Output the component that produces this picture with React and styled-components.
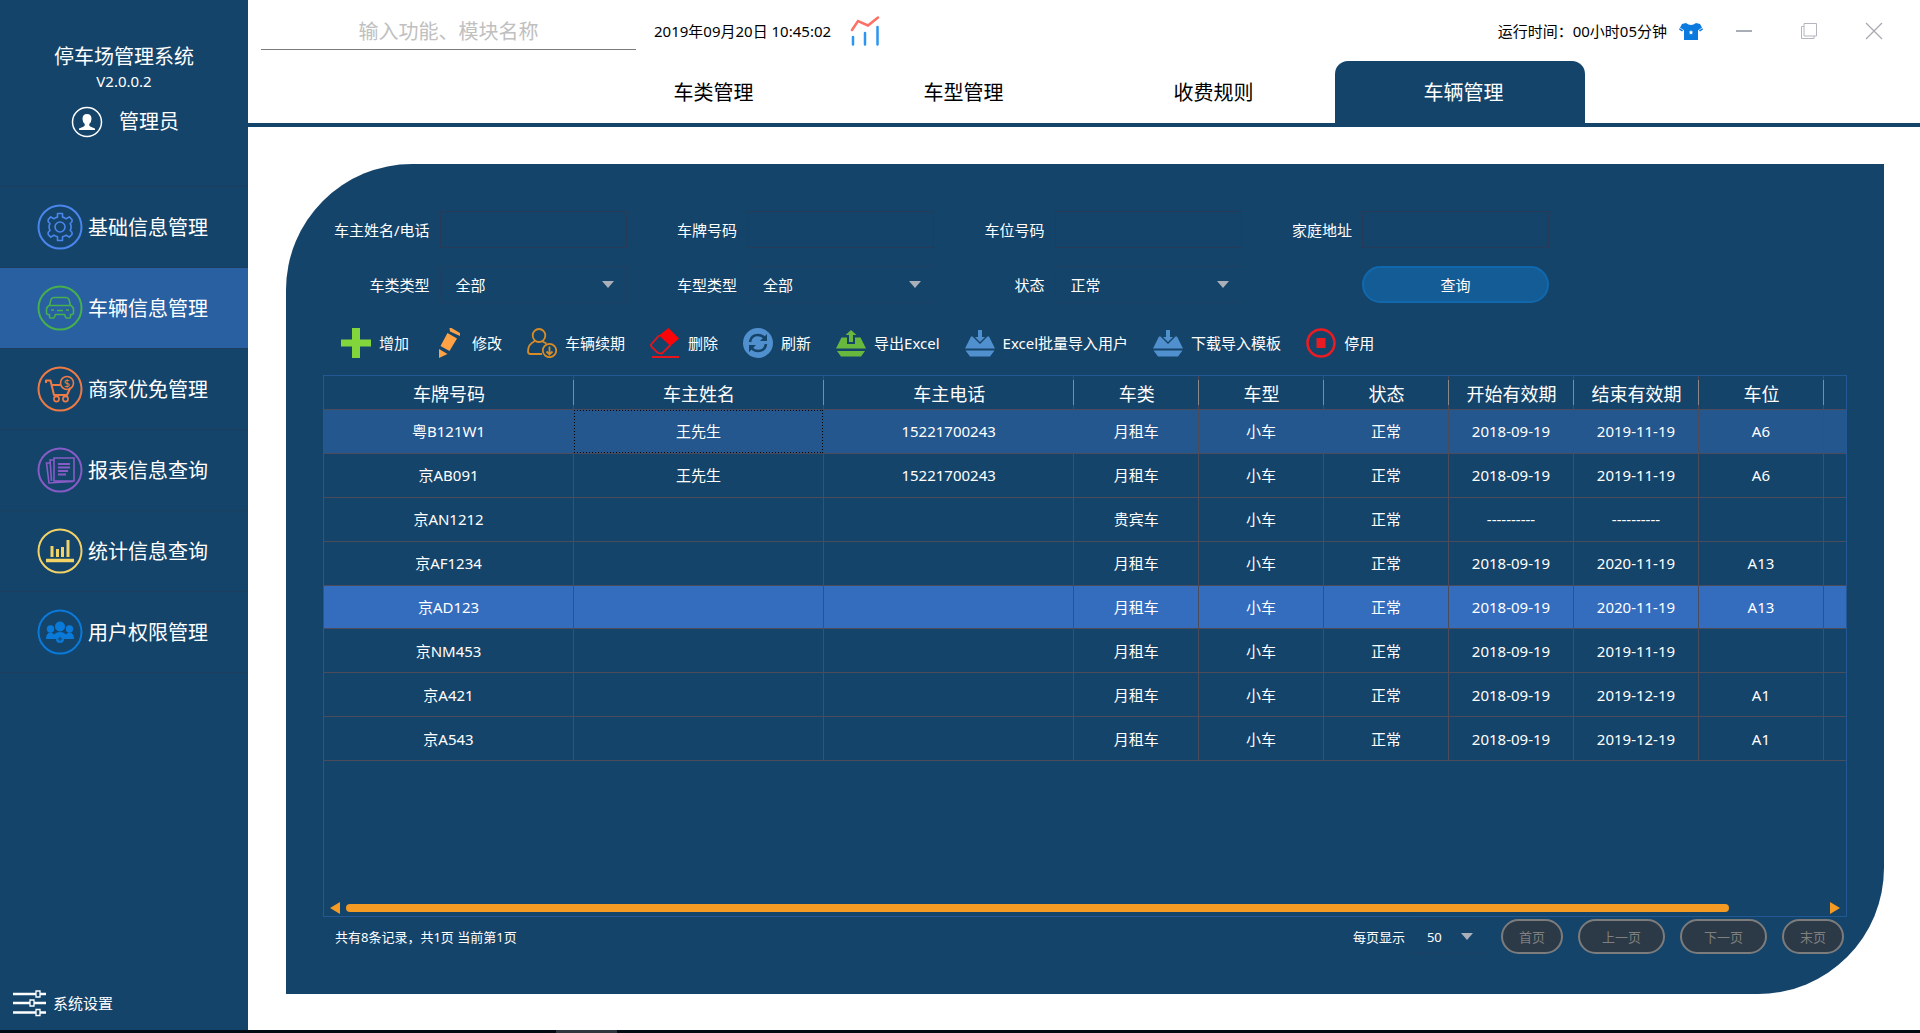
import React from 'react'
import styled, { createGlobalStyle } from "styled-components"

const GlobalStyle = createGlobalStyle`
  * {
    box-sizing: border-box;
  }

  body {
    margin: 0;
    background-color: white;
  }

  body, button, input, select {
    font-family: "Noto Sans", "Noto Sans CJK SC", sans-serif;
    font-size: 15px;
  }

  button {
    padding: 0;
    border: none;
    background: none;
    color: inherit;
    cursor: pointer;
  }
`;

const Page = styled.div`
  min-height: 100vh;
  display: flex;
  flex-direction: column;
`;

const Body = styled.div`
  flex: 1;
  display: flex;
`;

const TaskStrip = styled.div`
  height: 3px;
  padding-left: 556px;
  background-color: #020a14;
`;

const TaskMark = styled.div`
  width: 61px;
  height: 3px;
  background-color: #2f353c;
`;

/* sidebar */

const Sidebar = styled.aside`
  flex: 0 0 248px;
  display: flex;
  flex-direction: column;
  background-color: #15446a;
  color: white;
`;

const Brand = styled.div`
  height: 186px;
  padding-top: 45px;
  display: flex;
  flex-direction: column;
  align-items: center;
`;

const Title = styled.h1`
  margin: 0;
  font-size: 20px;
  line-height: 24px;
  font-weight: 400;
`;

const Version = styled.span`
  margin-top: 2px;
  line-height: 20px;
`;

const User = styled.div`
  margin-top: 15px;
  padding-left: 2px;
  display: flex;
  align-items: center;
  gap: 16px;
  font-size: 20px;
  line-height: 32px;
`;

const Menu = styled.nav`
  flex: 1;
`;

const MenuItem = styled.a`
  height: 81px;
  padding-left: 37px;
  border-top: 1px solid #1d3f5d;
  display: flex;
  align-items: center;
  gap: 5px;
  color: white;
  font-size: 20px;
  line-height: 24px;
  text-decoration: none;
  background-color: ${(props) => (props.$active ? "#2960a2" : "transparent")};

  span {
    padding-top: 2px;
  }

  &:last-child {
    height: 82px;
    border-bottom: 1px solid #1d3f5d;
  }
`;

const Settings = styled.a`
  height: 54px;
  padding-left: 13px;
  display: flex;
  align-items: center;
  gap: 7px;
  color: white;
  line-height: 20px;
  text-decoration: none;
`;

/* header */

const Main = styled.main`
  flex: 1;
  min-width: 0;
  display: flex;
  flex-direction: column;
`;

const Header = styled.header`
  height: 61px;
  padding: 0 14px 0 13px;
  display: flex;
  align-items: center;
  color: black;
`;

const Search = styled.input`
  width: 375px;
  height: 38px;
  padding: 2px 0 0;
  border: none;
  border-bottom: 1px solid #7a7a7a;
  outline: none;
  background: none;
  font-size: 20px;
  text-align: center;

  &::placeholder {
    color: #c0c0c0;
  }
`;

const Clock = styled.time`
  margin: 0 19px 0 18px;
  line-height: 20px;
`;

const Runtime = styled.span`
  margin-left: auto;
  margin-right: 12px;
  line-height: 20px;
`;

const IconButton = styled.button`
  display: flex;
`;

const WindowButtons = styled.div`
  margin-left: 8px;
  display: flex;
`;

const WindowButton = styled.button`
  width: 65px;
  height: 40px;
  display: flex;
  align-items: center;
  justify-content: center;
`;

const Tabs = styled.nav`
  padding-left: 2px;
  display: flex;
  justify-content: center;
  border-bottom: 4px solid #15446a;
`;

const Tab = styled.button`
  width: 250px;
  height: 62px;
  padding: 2px 0 0 7px;
  border-radius: 13px 13px 0 0;
  font-size: 20px;
  line-height: 24px;
  background-color: ${(props) => (props.$active ? "#15446a" : "transparent")};
  color: ${(props) => (props.$active ? "white" : "black")};
`;

/* panel */

const Panel = styled.section`
  flex: 1;
  margin: 37px 36px 36px 38px;
  padding: 47px 37px 40px;
  display: flex;
  flex-direction: column;
  border-radius: 126px 0 126px 0;
  background-color: #15446a;
  color: white;
`;

const Filters = styled.form`
  max-width: 1226px;
  display: grid;
  grid-template-columns: repeat(4, 1fr);
  gap: 18px 4px;
`;

const Field = styled.div`
  display: flex;
  align-items: center;
  justify-content: flex-end;
  gap: 10px;
  line-height: 20px;
`;

const TextInput = styled.input`
  width: 187px;
  height: 37px;
  padding: 0 15px;
  border: 1px solid #273a57;
  outline: none;
  background: none;
  color: white;
`;

const SelectBox = styled.div`
  display: grid;
  align-items: center;

  > * {
    grid-area: 1 / 1;
  }

  svg {
    justify-self: end;
    margin-right: 13px;
    pointer-events: none;
  }
`;

const Select = styled.select`
  width: ${(props) => (props.$small ? "75px" : "187px")};
  height: ${(props) => (props.$small ? "35px" : "37px")};
  padding: 0 15px;
  border: 1px solid #1e3f62;
  outline: none;
  appearance: none;
  background: none;
  color: white;
  font-size: ${(props) => (props.$small ? "13px" : "15px")};
`;

const QueryButton = styled.button`
  width: 187px;
  height: 37px;
  border: 2px solid #1168ad;
  border-radius: 19px;
  background-color: #145c95;
`;

const Toolbar = styled.div`
  margin: 25px 0 17px;
  padding-left: 18px;
  display: flex;
  flex-wrap: wrap;
  gap: 25px;
`;

const Tool = styled.button`
  display: flex;
  align-items: center;
  gap: 8px;
  line-height: 20px;
`;

const TableBox = styled.div`
  flex: 1;
  border: 1px solid #225995;
  display: flex;
  flex-direction: column;
  justify-content: space-between;
`;

const Table = styled.table`
  width: 100%;
  height: 385px;
  table-layout: fixed;
  border-collapse: separate;
  border-spacing: 0;
  text-align: center;
`;

const Col = styled.col`
  width: ${(props) => props.$width};
`;

const HeadCell = styled.th`
  height: 34px;
  padding: 2px 0 0;
  border-bottom: 1px solid #4b4b5c;
  background:
    linear-gradient(#8c8788, #8c8788) right center / 1px 25px no-repeat,
    linear-gradient(#4b4b5c, #4b4b5c) right center / 1px 100% no-repeat;
  font-size: 18px;
  line-height: 24px;
  font-weight: 400;

  &:last-child {
    background: none;
  }
`;

const Row = styled.tr`
  background-color: ${(props) => props.$color || "transparent"};
`;

const dots = (direction) =>
  `repeating-linear-gradient(to ${direction}, black 0 1px, transparent 1px 3px)`;

const Cell = styled.td`
  padding: 0;
  border-right: 1px solid #4b4b5c;
  border-bottom: 1px solid #4b4b5c;
  line-height: 20px;

  ${(props) =>
    props.$focused &&
    `
    background:
      ${dots("right")} top / 100% 1px no-repeat,
      ${dots("right")} bottom / 100% 1px no-repeat,
      ${dots("bottom")} left / 1px 100% no-repeat,
      ${dots("bottom")} right / 1px 100% no-repeat;
  `}

  &:last-child {
    border-right: none;
  }
`;

const Scrollbar = styled.div`
  padding: 0 6px 2px;
  display: flex;
  align-items: center;
  gap: 6px;
`;

const Track = styled.div`
  flex: 1;
`;

const Thumb = styled.div`
  width: 93.6%;
  height: 8px;
  border-radius: 4px;
  background-color: #f59a22;
`;

const Footer = styled.footer`
  margin-top: 2px;
  padding: 0 3px 0 12px;
  display: flex;
  align-items: center;
  gap: 15px;
  font-size: 13px;
  line-height: 20px;
`;

const Summary = styled.span`
  flex: 1;
`;

const PageSize = styled.div`
  display: flex;
  align-items: center;
  gap: 6px;
`;

const PageButton = styled.button`
  height: 35px;
  padding: 0 ${(props) => (props.$narrow ? "16px" : "22px")};
  border: 2px solid #7c7c7c;
  border-radius: 18px;
  background-color: #2c3a47;
  color: #7f7f7f;
  font-size: 13px;
  line-height: 20px;
`;

/* icons */

const Arrow = () => (
  <svg width="12" height="7" viewBox="0 0 12 7">
    <path d="M0 0h12L6 7z" fill="#a9b0b9" />
  </svg>
);

const Ring = ({ color, children }) => (
  <svg width="46" height="46" viewBox="0 0 46 46" fill="none" stroke={color} strokeWidth="1.6">
    <circle cx="23" cy="23" r="21.5" strokeWidth="2" />
    {children}
  </svg>
);

const GearIcon = () => (
  <Ring color="#4a86ee">
    <path
      strokeLinejoin="round"
      d="M20.5 9.5h5v3.6q2 .5 3.6 1.700l3.200-1.900 2.700 2.600v2.200l-1.800 1.800q.9 1.600.9 3.500t-.9 3.500l1.800 1.800v2.200l-2.700 2.600-3.200-1.900q-1.600 1.200-3.600 1.700v3.600h-5v-3.600q-2-.5-3.600-1.700l-3.200 1.900-2.500-2.600v-2.200l1.800-1.800q-.9-1.600-.9-3.500t.9-3.500l-1.800-1.800v-2.200l2.500-2.600 3.200 1.900q1.600-1.200 3.600-1.700z"
    />
    <circle cx="23" cy="23" r="5" />
  </Ring>
);

const CarIcon = () => (
  <Ring color="#46b04c">
    <path d="M12.500 20.500l1.500-6q.8-2 3-2h12q2.200 0 3 2l1.500 6" />
    <path d="M12 20.500h22q2.500 1.500 2.500 4V28q0 1.500-1.500 1.500h-1.500V32q0 1-1 1h-3q-1 0-1-1l-1-2.500h-9L17.500 32q0 1-1 1h-3q-1 0-1-1v-2.500H11Q9.500 29.500 9.500 28v-3.500q0-2.500 2.500-4z" strokeLinejoin="round" />
    <path d="M14 25h3M20 25.500h6M29 25h3" />
  </Ring>
);

const CartIcon = () => (
  <Ring color="#ee7b46">
    <path d="M9 17v-2.500h4.500L17 29h13l3.500-7.500M14.500 19h9" strokeWidth="2" strokeLinejoin="round" />
    <circle cx="19.500" cy="33" r="2.600" />
    <circle cx="28.500" cy="33" r="2.600" />
    <circle cx="30" cy="17" r="6.500" />
    <text x="30" y="21" textAnchor="middle" fontSize="11" fill="#ee7b46" stroke="none">$</text>
  </Ring>
);

const ReportIcon = () => (
  <Ring color="#875cc6">
    <path d="M17 11h20v23H17zM17 13h-4l1.500 21M13 16H9.500L12 36l24-1.500" />
    <path d="M21 17h12M21 20.500h12M21 24h10M21 27.500h8" strokeWidth="1.800" />
  </Ring>
);

const StatsIcon = () => (
  <Ring color="#f3d266">
    <path d="M15 18v11M20.500 21v8M25.500 19v10M31 12v17" strokeWidth="3" />
    <path d="M9 32.500h28" strokeWidth="3.500" />
  </Ring>
);

const PeopleIcon = () => (
  <Ring color="#0a7ada">
    <g fill="#0a7ada" stroke="none">
      <circle cx="13.500" cy="20" r="3.700" />
      <circle cx="32.500" cy="20" r="3.700" />
      <path d="M9 30q0-6 4.500-6.500 3 .5 4 2.500-1 1.500-1 4zM37 30q0-6-4.500-6.500-3 .5-4 2.500 1 1.500 1 4z" />
      <circle cx="23" cy="17.500" r="5" />
      <path d="M16 30q0-7 7-7t7 7h-3q-1-3-4-3t-4 3z" />
      <circle cx="23" cy="30" r="4" />
    </g>
    <path d="M23 27.700v4.600M20.700 30h4.600" stroke="#15446a" strokeWidth="1" />
  </Ring>
);

const UserIcon = () => (
  <svg width="32" height="32" viewBox="0 0 32 32">
    <circle cx="16" cy="16" r="14.500" fill="none" stroke="white" strokeWidth="1.500" />
    <path d="M16 8q4.500 0 4.500 5 0 3-2.200 5v1.500q0 .8 5.700 3v1.500H8v-1.500q5.700-2.200 5.700-3V18q-2.200-2-2.200-5 0-5 4.500-5z" fill="white" />
  </svg>
);

const SlidersIcon = () => (
  <svg width="33" height="28" viewBox="0 0 33 28" stroke="white">
    <path d="M0 5h33M0 14h33M0 23.500h33" strokeWidth="2.500" />
    <path d="M23 2h4v6h-4zM17 11h4v6h-4zM23 20.500h4v6h-4z" fill="#15446a" strokeWidth="1.300" />
  </svg>
);

const ChartIcon = () => (
  <svg width="30" height="30" viewBox="0 0 30 30" fill="none" strokeLinecap="round" strokeWidth="2.500">
    <path d="M2 14l6-9 10 4.500L28 1.500" stroke="#fc7066" />
    <path d="M3 21v7.500M15 17v11.500M27.500 11v17.500" stroke="#2b95f0" />
  </svg>
);

const ShirtIcon = () => (
  <svg width="24" height="18" viewBox="0 0 24 18">
    <path d="M7 1q5 4 10 0l4 1 3 5.500-3 2-2-2V18H5V7.500l-2 2-3-2L3 2z" fill="#0a7ade" />
    <path d="M1 6l3 2M23 6l-3 2" stroke="white" strokeWidth=".8" />
    <path d="M12 8l.7 1.500 1.600.2-1.200 1.100.3 1.700-1.400-.8-1.400.8.3-1.700-1.200-1.100 1.600-.2z" fill="white" />
  </svg>
);

const PlusIcon = () => (
  <svg width="30" height="30" viewBox="0 0 30 30">
    <path d="M11 0h8v11.500h11v7H19V30h-8V18.500H0v-7h11z" fill="#82d63c" />
  </svg>
);

const PencilIcon = () => (
  <svg width="30" height="30" viewBox="0 0 30 30" fill="#ffa145">
    <path d="M15.500 0h2l8.500 5v3L16 3.500zM13.500 5l9.500 5.500-7.500 12.500L6.500 18zM5 21l8.500 5L5 30z" />
  </svg>
);

const RenewIcon = () => (
  <svg width="30" height="30" viewBox="0 0 30 30" fill="none" stroke="#d98c26" strokeWidth="1.800">
    <ellipse cx="12" cy="7.500" rx="6.300" ry="6.500" />
    <path d="M8 13q-7 3-7 10.500Q1 26 3.500 26H15M15.500 13.500l4 2" />
    <circle cx="22.500" cy="22.500" r="6.700" />
    <path d="M22.500 18.500v7.500M19.500 23.500l3 3 3-3" />
  </svg>
);

const EraserIcon = () => (
  <svg width="30" height="30" viewBox="0 0 30 30">
    <path d="M18.500 0L29 10.500 20.500 18 9 7.500z" fill="#fb0508" />
    <path d="M9 7.500L1.200 16.500q-.7 1 .3 2.200l6 6q1 .9 4.500.6L20.500 17M2 29h27" fill="none" stroke="#e8141c" strokeWidth="1.800" />
  </svg>
);

const RefreshIcon = () => (
  <svg width="30" height="30" viewBox="0 0 30 30" fill="none">
    <circle cx="15" cy="15" r="15" fill="#5190cf" />
    <path d="M7 14q1-7 8-7 4 0 6.500 3M23 16q-1 7-8 7-4 0-6.500-3" stroke="#15446a" strokeWidth="2.500" />
    <path d="M24 6v7h-7zM6 24v-7h7z" fill="#15446a" />
  </svg>
);

const ExportIcon = () => (
  <svg width="30" height="30" viewBox="0 0 30 30" fill="#68b83e">
    <path d="M5.500 9.500H11V16h8V9.500h5.500L30 20.500H0zM1 23h28l-4 5.500H5z" />
    <path d="M15 2l5.500 5H17v7h-4V7H9.500z" />
  </svg>
);

const ImportIcon = () => (
  <svg width="30" height="30" viewBox="0 0 30 30" fill="#5190cf">
    <path d="M6 8.500h1.500L15 16l7.500-7.500H24l6 12H0zM.5 22.500h29L25 28.500H5z" />
    <path d="M13 2h4v7h3L15 14 10 9h3z" />
  </svg>
);

const StopIcon = () => (
  <svg width="30" height="30" viewBox="0 0 30 30">
    <circle cx="15" cy="15" r="13.500" fill="none" stroke="#e81c22" strokeWidth="2.600" />
    <path d="M10.500 10h9v10h-9z" fill="#e81c22" />
  </svg>
);

const menu = [
  { label: "基础信息管理", icon: <GearIcon /> },
  { label: "车辆信息管理", icon: <CarIcon />, active: true },
  { label: "商家优免管理", icon: <CartIcon /> },
  { label: "报表信息查询", icon: <ReportIcon /> },
  { label: "统计信息查询", icon: <StatsIcon /> },
  { label: "用户权限管理", icon: <PeopleIcon /> },
];

const tabs = ["车类管理", "车型管理", "收费规则", "车辆管理"];

const tools = [
  { label: "增加", icon: <PlusIcon /> },
  { label: "修改", icon: <PencilIcon /> },
  { label: "车辆续期", icon: <RenewIcon /> },
  { label: "删除", icon: <EraserIcon /> },
  { label: "刷新", icon: <RefreshIcon /> },
  { label: "导出Excel", icon: <ExportIcon /> },
  { label: "Excel批量导入用户", icon: <ImportIcon /> },
  { label: "下载导入模板", icon: <ImportIcon /> },
  { label: "停用", icon: <StopIcon /> },
];

const columns = [
  { label: "车牌号码", width: "16.43%" },
  { label: "车主姓名", width: "16.43%" },
  { label: "车主电话", width: "16.43%" },
  { label: "车类", width: "8.21%" },
  { label: "车型", width: "8.21%" },
  { label: "状态", width: "8.21%" },
  { label: "开始有效期", width: "8.21%" },
  { label: "结束有效期", width: "8.21%" },
  { label: "车位", width: "8.21%" },
  { label: "", width: "auto" },
];

const rows = [
  ["粤B121W1", "王先生", "15221700243", "月租车", "小车", "正常", "2018-09-19", "2019-11-19", "A6", ""],
  ["京AB091", "王先生", "15221700243", "月租车", "小车", "正常", "2018-09-19", "2019-11-19", "A6", ""],
  ["京AN1212", "", "", "贵宾车", "小车", "正常", "----------", "----------", "", ""],
  ["京AF1234", "", "", "月租车", "小车", "正常", "2018-09-19", "2020-11-19", "A13", ""],
  ["京AD123", "", "", "月租车", "小车", "正常", "2018-09-19", "2020-11-19", "A13", ""],
  ["京NM453", "", "", "月租车", "小车", "正常", "2018-09-19", "2019-11-19", "", ""],
  ["京A421", "", "", "月租车", "小车", "正常", "2018-09-19", "2019-12-19", "A1", ""],
  ["京A543", "", "", "月租车", "小车", "正常", "2018-09-19", "2019-12-19", "A1", ""],
];

// selected row and hovered row
const rowColors = { 0: "#24578e", 4: "#346dbe" };

const TextField = ({ id, label }) => (
  <Field>
    <label htmlFor={id}>{label}</label>
    <TextInput id={id} type="text" />
  </Field>
);

const SelectField = ({ id, label, value }) => (
  <Field>
    <label htmlFor={id}>{label}</label>
    <SelectBox>
      <Select id={id} defaultValue={value}>
        <option>{value}</option>
      </Select>
      <Arrow />
    </SelectBox>
  </Field>
);

const App = () => {
  return (
    <Page>
      <GlobalStyle />
      <Body>
        <Sidebar>
          <Brand>
            <Title>停车场管理系统</Title>
            <Version>V2.0.0.2</Version>
            <User>
              <UserIcon />
              管理员
            </User>
          </Brand>
          <Menu>
            {menu.map((item) => (
              <MenuItem key={item.label} href="#" $active={item.active}>
                {item.icon}
                <span>{item.label}</span>
              </MenuItem>
            ))}
          </Menu>
          <Settings href="#">
            <SlidersIcon />
            系统设置
          </Settings>
        </Sidebar>
        <Main>
          <Header>
            <Search type="text" aria-label="搜索" placeholder="输入功能、模块名称" />
            <Clock>2019年09月20日 10:45:02</Clock>
            <ChartIcon />
            <Runtime>运行时间：00小时05分钟</Runtime>
            <IconButton aria-label="皮肤">
              <ShirtIcon />
            </IconButton>
            <WindowButtons>
              <WindowButton aria-label="最小化">
                <svg width="18" height="18" viewBox="0 0 18 18">
                  <path d="M1 9h16" stroke="#a9adb5" strokeWidth="2" />
                </svg>
              </WindowButton>
              <WindowButton aria-label="还原">
                <svg width="18" height="18" viewBox="0 0 18 18" fill="none" stroke="#b3b6bf">
                  <path d="M4 1.500h12.500v12.500H4zM4 4.500H1.500v12H14V14" />
                </svg>
              </WindowButton>
              <WindowButton aria-label="关闭">
                <svg width="18" height="18" viewBox="0 0 18 18">
                  <path d="M1 1l16 16M17 1L1 17" stroke="#a8a8b0" strokeWidth="1.200" />
                </svg>
              </WindowButton>
            </WindowButtons>
          </Header>
          <Tabs>
            {tabs.map((tab, i) => (
              <Tab key={tab} $active={i === 3}>{tab}</Tab>
            ))}
          </Tabs>
          <Panel>
            <Filters>
              <TextField id="owner" label="车主姓名/电话" />
              <TextField id="plate" label="车牌号码" />
              <TextField id="space" label="车位号码" />
              <TextField id="address" label="家庭地址" />
              <SelectField id="kind" label="车类类型" value="全部" />
              <SelectField id="model" label="车型类型" value="全部" />
              <SelectField id="status" label="状态" value="正常" />
              <Field>
                <QueryButton type="button">查询</QueryButton>
              </Field>
            </Filters>
            <Toolbar>
              {tools.map((tool) => (
                <Tool key={tool.label}>
                  {tool.icon}
                  {tool.label}
                </Tool>
              ))}
            </Toolbar>
            <TableBox>
              <Table>
                <colgroup>
                  {columns.map((col, i) => (
                    <Col key={i} $width={col.width} />
                  ))}
                </colgroup>
                <thead>
                  <tr>
                    {columns.map((col, i) => (
                      <HeadCell key={i}>{col.label}</HeadCell>
                    ))}
                  </tr>
                </thead>
                <tbody>
                  {rows.map((row, r) => (
                    <Row key={r} $color={rowColors[r]}>
                      {row.map((text, c) => (
                        <Cell key={c} $focused={r === 0 && c === 1}>{text}</Cell>
                      ))}
                    </Row>
                  ))}
                </tbody>
              </Table>
              <Scrollbar>
                <IconButton aria-label="向左滚动">
                  <svg width="10" height="12" viewBox="0 0 10 12">
                    <path d="M10 0v12L0 6z" fill="#f59a22" />
                  </svg>
                </IconButton>
                <Track>
                  <Thumb />
                </Track>
                <IconButton aria-label="向右滚动">
                  <svg width="10" height="12" viewBox="0 0 10 12">
                    <path d="M0 0v12l10-6z" fill="#f59a22" />
                  </svg>
                </IconButton>
              </Scrollbar>
            </TableBox>
            <Footer>
              <Summary>共有8条记录，共1页 当前第1页</Summary>
              <PageSize>
                <label htmlFor="size">每页显示</label>
                <SelectBox>
                  <Select id="size" $small defaultValue="50">
                    <option>50</option>
                  </Select>
                  <Arrow />
                </SelectBox>
              </PageSize>
              <PageButton $narrow>首页</PageButton>
              <PageButton>上一页</PageButton>
              <PageButton>下一页</PageButton>
              <PageButton $narrow>末页</PageButton>
            </Footer>
          </Panel>
        </Main>
      </Body>
      <TaskStrip>
        <TaskMark />
      </TaskStrip>
    </Page>
  );
};

export default App
